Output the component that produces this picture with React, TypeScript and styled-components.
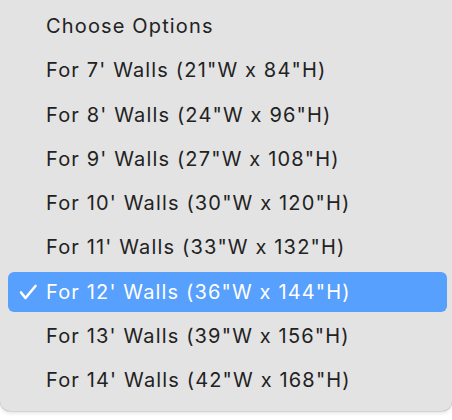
import React from "react";
import styled, { createGlobalStyle } from "styled-components";

const Global = createGlobalStyle`
  html, body { margin: 0; padding: 0; background: #ffffff; }
  body { width: 452px; height: 420px; overflow: hidden; }
`;

const Menu = styled.div`
  box-sizing: border-box;
  width: 452px;
  height: 411px;
  background: #e3e3e3;
  border-radius: 0 0 10px 10px;
  box-shadow: 0 0 0 0.5px rgba(0, 0, 0, 0.18), 0 2px 4px rgba(0, 0, 0, 0.12);
  padding: 4px 5px 0 8px;
  display: flex;
  flex-direction: column;
  font-family: Inter, "Liberation Sans", sans-serif;
`;

const Row = styled.div`
  height: 44.25px;
  box-sizing: border-box;
  padding: 2px 0;
  display: flex;
`;

const Inner = styled.div<{ $selected?: boolean }>`
  flex: 1;
  display: flex;
  align-items: center;
  border-radius: 6px;
  background: ${(p) => (p.$selected ? "#57a0fd" : "transparent")};
  color: ${(p) => (p.$selected ? "#ffffff" : "#222222")};
  font-size: 20px;
  letter-spacing: 1.15px;
`;

const CheckSlot = styled.div`
  width: 38px;
  display: flex;
  justify-content: flex-start;
  padding-left: 11px;
  box-sizing: border-box;
  align-items: center;
`;

const Label = styled.span`
  white-space: nowrap;
`;

const options = [
  "Choose Options",
  "For 7' Walls (21\"W x 84\"H)",
  "For 8' Walls (24\"W x 96\"H)",
  "For 9' Walls (27\"W x 108\"H)",
  "For 10' Walls (30\"W x 120\"H)",
  "For 11' Walls (33\"W x 132\"H)",
  "For 12' Walls (36\"W x 144\"H)",
  "For 13' Walls (39\"W x 156\"H)",
  "For 14' Walls (42\"W x 168\"H)",
];

const Check = () => (
  <svg width="19" height="16" viewBox="0 0 19 16">
    <path
      d="M2 8.5 L6.5 14 L16.5 2"
      fill="none"
      stroke="#ffffff"
      strokeWidth="2.6"
      strokeLinecap="round"
      strokeLinejoin="round"
    />
  </svg>
);

export default function App() {
  return (
    <>
      <Global />
      <Menu>
        {options.map((o, i) => {
          const sel = i === 6;
          return (
            <Row key={o}>
              <Inner $selected={sel}>
                <CheckSlot>{sel ? <Check /> : null}</CheckSlot>
                <Label>{o}</Label>
              </Inner>
            </Row>
          );
        })}
      </Menu>
    </>
  );
}
